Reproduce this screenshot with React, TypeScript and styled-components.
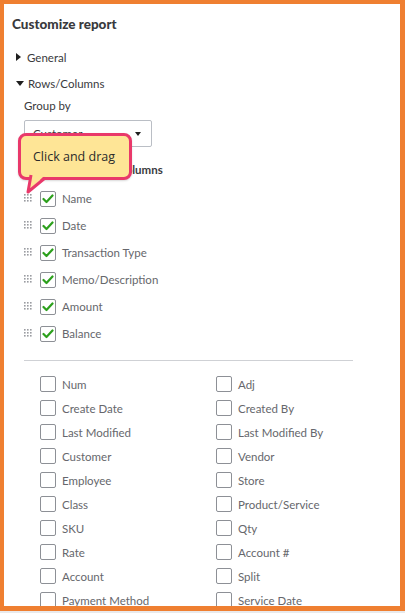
import styled, { createGlobalStyle } from "styled-components";

const GlobalStyle = createGlobalStyle`
  html, body {
    margin: 0;
    padding: 0;
    background: #ffffff;
  }
  body {
    font-family: Lato, "Open Sans", "Liberation Sans", sans-serif;
    color: #393a3d;
  }
`;

const Page = styled.div`
  width: 405px;
  height: 613px;
  background: #e9eaec;
  overflow: hidden;
`;

const Frame = styled.div`
  position: relative;
  box-sizing: border-box;
  width: 405px;
  height: 611px;
  border: 4px solid #ef7f31;
  border-right-width: 5px;
  border-bottom-width: 5px;
  background: #ffffff;
  overflow: hidden;
`;

const Title = styled.h2`
  margin: 10px 0 10px 8px;
  font-size: 13.5px;
  line-height: 20px;
  font-weight: 900;
  color: #393a3d;
`;

const SectionHeader = styled.div<{ $h: number }>`
  display: flex;
  align-items: center;
  gap: 4px;
  height: ${(p) => p.$h}px;
  padding-left: 12px;
  font-size: 11.5px;
  color: #393a3d;
`;

const Caret = styled.span<{ $open?: boolean }>`
  width: 0;
  height: 0;
  ${(p) =>
    p.$open
      ? `border-left: 4px solid transparent;
         border-right: 4px solid transparent;
         border-top: 5px solid #1f1f1f;`
      : `border-top: 4px solid transparent;
         border-bottom: 4px solid transparent;
         border-left: 5px solid #1f1f1f;
         margin-right: 2px;`}
`;

const Body = styled.div`
  padding-left: 20px;
`;

const FieldLabel = styled.div`
  margin-top: 1px;
  font-size: 11.5px;
  line-height: 16px;
  color: #393a3d;
`;

const Select = styled.div`
  box-sizing: border-box;
  margin-top: 6px;
  width: 128px;
  height: 27px;
  border: 1px solid #babec5;
  border-radius: 2px;
  display: flex;
  align-items: center;
  justify-content: space-between;
  padding: 0 10px 0 8px;
  font-size: 11.5px;
  color: #393a3d;
`;

const SelectArrow = styled.span`
  width: 0;
  height: 0;
  border-left: 3.5px solid transparent;
  border-right: 3.5px solid transparent;
  border-top: 4px solid #1f1f1f;
`;

const ColumnsLabel = styled.div`
  margin-top: 15px;
  font-size: 11.5px;
  line-height: 16px;
  font-weight: 700;
  color: #393a3d;
`;

const OrderList = styled.div`
  margin-top: 7px;
  display: flex;
  flex-direction: column;
`;

const OrderRow = styled.div`
  display: flex;
  align-items: center;
  height: 27px;
`;

const Handle = styled.svg`
  width: 9px;
  height: 9px;
  margin-right: 7px;
  flex: none;
`;

const Box = styled.span`
  box-sizing: border-box;
  width: 16px;
  height: 16px;
  border: 1px solid #8d9096;
  border-radius: 2px;
  background: #fff;
  display: flex;
  align-items: center;
  justify-content: center;
  flex: none;
`;

const Label = styled.span`
  margin-left: 6px;
  font-size: 11.5px;
  color: #66676c;
  white-space: nowrap;
`;

const Divider = styled.hr`
  margin: 13px 0 0 0;
  width: 329px;
  border: none;
  border-top: 1px solid #cfd1d5;
`;

const Grid = styled.div`
  margin-top: 11px;
  padding-left: 16px;
  display: grid;
  grid-template-columns: 176px 176px;
  grid-auto-rows: 24px;
`;

const GridItem = styled.div`
  display: flex;
  align-items: center;
`;

const Callout = styled.div`
  position: absolute;
  left: 14px;
  top: 129px;
  width: 114px;
  height: 47px;
  box-sizing: border-box;
  border: 3px solid #e9386a;
  border-radius: 8px;
  background: #fee596;
  display: flex;
  align-items: center;
  padding-left: 12px;
  font-family: "Open Sans", Lato, "Liberation Sans", sans-serif;
  font-size: 12.5px;
  color: #2b2b2b;
  box-shadow: 0 1px 2px rgba(0, 0, 0, 0.15);
`;

const Tail = styled.svg`
  position: absolute;
  left: 22px;
  top: 170px;
  width: 30px;
  height: 20px;
  overflow: visible;
`;

const Check = () => (
  <svg width="12" height="10" viewBox="0 0 12 10">
    <polyline
      points="1.5,5 4.5,8 10.5,1.5"
      fill="none"
      stroke="#2ca01c"
      strokeWidth="2.2"
      strokeLinecap="round"
      strokeLinejoin="round"
    />
  </svg>
);

const DragHandle = () => (
  <Handle viewBox="0 0 9 9">
    {[0, 1, 2].map((r) =>
      [0, 1, 2].map((c) => (
        <rect key={`${r}-${c}`} x={c * 3} y={r * 3} width="1.6" height="1.6" fill="#9a9ca1" />
      ))
    )}
  </Handle>
);

const ordered = ["Name", "Date", "Transaction Type", "Memo/Description", "Amount", "Balance"];

const others = [
  "Num", "Adj",
  "Create Date", "Created By",
  "Last Modified", "Last Modified By",
  "Customer", "Vendor",
  "Employee", "Store",
  "Class", "Product/Service",
  "SKU", "Qty",
  "Rate", "Account #",
  "Account", "Split",
  "Payment Method", "Service Date",
];

export default function App() {
  return (
    <Page>
      <GlobalStyle />
      <Frame>
        <Title>Customize report</Title>
        <SectionHeader $h={26}>
          <Caret />
          General
        </SectionHeader>
        <SectionHeader $h={27}>
          <Caret $open />
          Rows/Columns
        </SectionHeader>
        <Body>
          <FieldLabel>Group by</FieldLabel>
          <Select>
            <span>Customer</span>
            <SelectArrow />
          </Select>
          <ColumnsLabel>Select and reorder columns</ColumnsLabel>
          <OrderList>
            {ordered.map((name) => (
              <OrderRow key={name}>
                <DragHandle />
                <Box>
                  <Check />
                </Box>
                <Label>{name}</Label>
              </OrderRow>
            ))}
          </OrderList>
          <Divider />
          <Grid>
            {others.map((name) => (
              <GridItem key={name}>
                <Box />
                <Label>{name}</Label>
              </GridItem>
            ))}
          </Grid>
        </Body>

        <Callout>Click and drag</Callout>
        <Tail viewBox="0 0 30 20">
          <polygon points="4,0 20,0 2,18" fill="#fee596" />
          <polyline
            points="5,1 2,18 19,4"
            fill="none"
            stroke="#e9386a"
            strokeWidth="3"
            strokeLinejoin="round"
          />
        </Tail>
      </Frame>
    </Page>
  );
}
